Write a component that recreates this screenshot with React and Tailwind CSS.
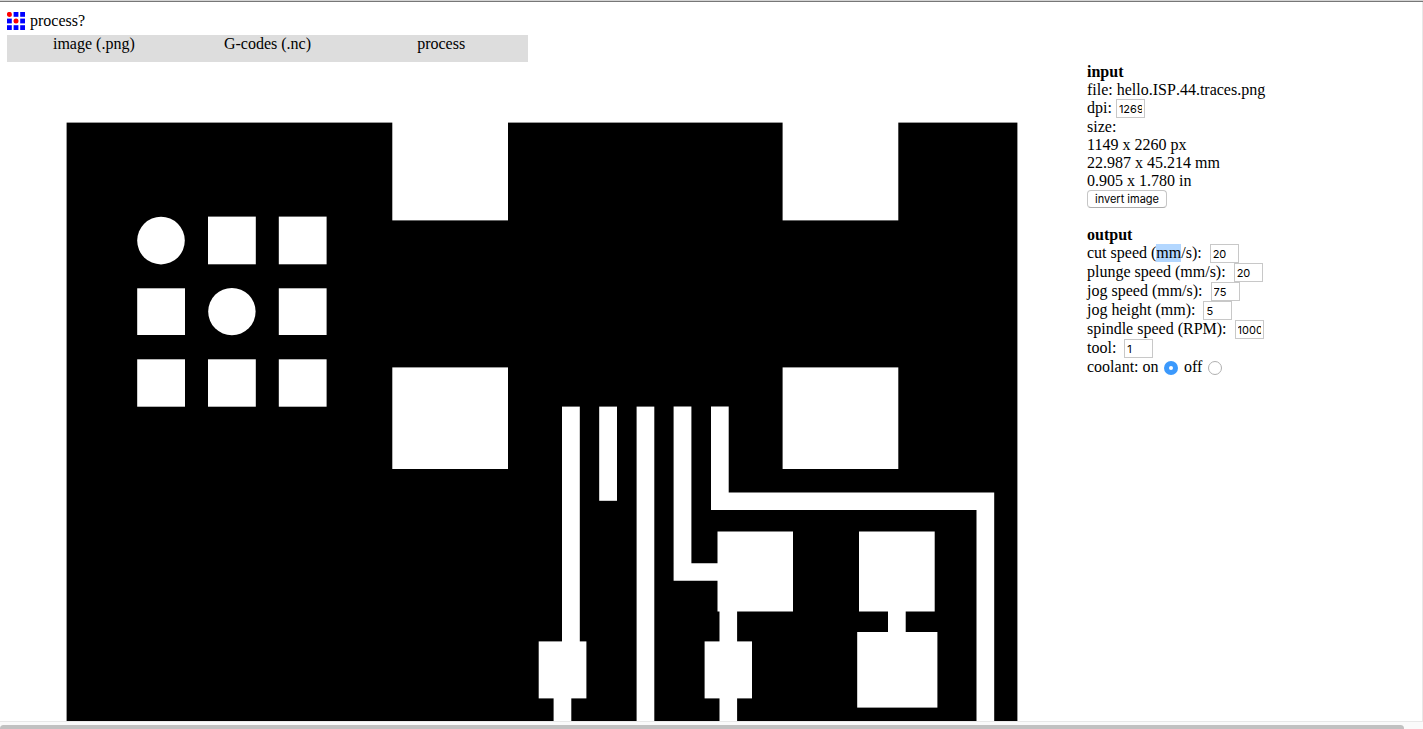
const whitePads = [
  // x, y, width, height
  [392.3, 122, 115.7, 98.4], [782.6, 122, 115.7, 98.4],
  [392.3, 367.4, 115.7, 101.6], [782.6, 367.4, 115.7, 101.6],
  [208, 216.6, 47.8, 47.7], [278.8, 216.6, 47.8, 47.7],
  [137.2, 288.3, 47.8, 46.7], [278.8, 288.3, 47.8, 46.7],
  [137.2, 359.3, 47.8, 47.4], [208, 359.3, 47.8, 47.4], [278.8, 359.3, 47.8, 47.4],
  [562, 406.6, 17.8, 236], [599.2, 406.6, 17.8, 94.2], [636.6, 406.6, 17.7, 320],
  [538.7, 641.4, 47.7, 57], [553.6, 698, 17.7, 30],
  [717.5, 531.5, 75.5, 80], [719.5, 610, 17.6, 33],
  [704.6, 641.4, 47.4, 57], [719.5, 698, 17.6, 30],
  [859, 531.5, 75.7, 80], [888, 610, 17.7, 24], [857.2, 632, 80.2, 75.6],
];

function Logo() {
  return (
    <svg className="size-[18px] shrink-0" viewBox="0 0 18 18">
      <g fill="#0000ff">
        <rect x="6.6" y="0" width="4.8" height="4.8" />
        <rect x="13.2" y="0" width="4.8" height="4.8" />
        <rect x="0" y="6.6" width="4.8" height="4.8" />
        <rect x="13.2" y="6.6" width="4.8" height="4.8" />
        <rect x="0" y="13.2" width="4.8" height="4.8" />
        <rect x="6.6" y="13.2" width="4.8" height="4.8" />
        <rect x="13.2" y="13.2" width="4.8" height="4.8" />
      </g>
      <circle cx="2.4" cy="2.4" r="2.5" fill="#ff0000" />
      <circle cx="9" cy="9" r="2.5" fill="#ff0000" />
    </svg>
  );
}

function Board() {
  return (
    <svg className="mt-[60px] ml-[59px] block h-[599px] w-[952px] shrink-0" viewBox="66 122 952 599">
      <rect x="66.6" y="122.6" width="950.8" height="610" fill="#000" />
      <g fill="#fff">
        {whitePads.map(([x, y, w, h], i) => (
          <rect key={i} x={x} y={y} width={w} height={h} />
        ))}
        <circle cx="161" cy="240.6" r="23.8" />
        <circle cx="231.9" cy="311.6" r="23.7" />
        <path d="M673.6 406.6H691.4V563.2H718V580.8H673.6Z" />
        <path d="M711 406.6H728.7V492.4H994.2V727H976.5V510H711Z" />
      </g>
    </svg>
  );
}

function Field({ label, value, gap = "ml-[8px]" }) {
  return (
    <div className="flex h-[19px]">
      <span className="h-[18px] whitespace-pre">{label}</span>
      <input
        defaultValue={value}
        aria-label="value"
        className={`${gap} h-[19px] w-[29px] rounded-none border border-[#c8c8c8] bg-white px-[2px] pt-px font-['Inter',sans-serif] text-[11px] text-black outline-none`}
      />
    </div>
  );
}

export default function App() {
  return (
    <div className="flex h-[729px] w-[1423px] flex-col overflow-hidden bg-white font-['Liberation_Serif',serif] text-[16px] leading-[18px] text-black">
      <div className="h-[2px] shrink-0 border-b border-[#777] bg-[#d4d4d4]" />
      <div className="flex h-[719px] shrink-0 overflow-hidden border-r border-[#e8e8e8] pl-[7px]">
        <div className="flex w-[1080px] shrink-0 flex-col">
          <div className="mt-[10px] flex h-[23px] items-start gap-[5px]">
            <Logo />
            <span>process?</span>
          </div>
          <nav className="grid h-[27px] w-[521px] shrink-0 grid-cols-3 bg-[#dddddd] text-center">
            <span>image (.png)</span>
            <span>G-codes (.nc)</span>
            <span>process</span>
          </nav>
          <Board />
        </div>
        <aside className="flex flex-col pt-[61px] whitespace-nowrap">
          <b>input</b>
          <span className="[font-kerning:none]">file: hello.ISP.44.traces.png</span>
          <Field label="dpi:" value="1269" gap="ml-[4px]" />
          <span>size:</span>
          <span>1149 x 2260 px</span>
          <span>22.987 x 45.214 mm</span>
          <span>0.905 x 1.780 in</span>
          <button className="h-[18px] w-[80px] rounded-[4px] border border-[#c6c6c6] border-b-[#adadad] bg-white font-['Inter',sans-serif] text-[11px] leading-[16px]">
            invert image
          </button>
          <b className="mt-[18px]">output</b>
          <Field label={<>cut speed (<span className="inline-block h-[18px] bg-[#b3d7ff]">mm</span>/s):</>} value="20" />
          <Field label="plunge speed (mm/s):" value="20" />
          <Field label="jog speed (mm/s):" value="75" />
          <Field label="jog height (mm):" value="5" />
          <Field label="spindle speed (RPM):" value="1000" />
          <Field label="tool:" value="1" />
          <div className="flex h-[19px]">
            <span>coolant: on</span>
            <span className="mt-[3px] ml-[5px] flex size-[14px] items-center justify-center rounded-full bg-[#3b99fc]">
              <span className="size-[4px] rounded-full bg-white" />
            </span>
            <span className="ml-[6.5px]">off</span>
            <span className="mt-[3px] ml-[6px] size-[14px] rounded-full border border-[#b0b0b0] bg-white" />
          </div>
        </aside>
      </div>
      <div className="h-[8px] shrink-0 overflow-hidden border-t border-[#e8e8e8] bg-[#fafafa] pt-[3px]">
        <div className="h-[7px] w-[1404px] rounded-full bg-[#c1c1c1]" />
      </div>
    </div>
  );
}
